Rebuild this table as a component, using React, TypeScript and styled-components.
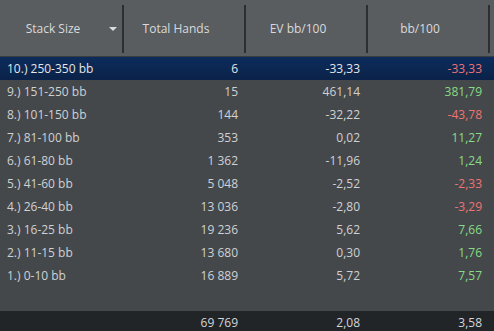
import React from "react";
import styled, { createGlobalStyle } from "styled-components";

const GlobalStyle = createGlobalStyle`
  html, body {
    margin: 0;
    padding: 0;
    background: #45484b;
  }
  body {
    font-family: "Open Sans", "Noto Sans", sans-serif;
    font-size: 12px;
  }
`;

type Tone = "plain" | "neg" | "pos";

interface IRow {
  label: string;
  hands: string;
  ev: string;
  bb: string;
  tone: Tone;
}

const rows: IRow[] = [
  { label: "10.) 250-350 bb", hands: "6", ev: "-33,33", bb: "-33,33", tone: "neg" },
  { label: "9.) 151-250 bb", hands: "15", ev: "461,14", bb: "381,79", tone: "pos" },
  { label: "8.) 101-150 bb", hands: "144", ev: "-32,22", bb: "-43,78", tone: "neg" },
  { label: "7.) 81-100 bb", hands: "353", ev: "0,02", bb: "11,27", tone: "pos" },
  { label: "6.) 61-80 bb", hands: "1 362", ev: "-11,96", bb: "1,24", tone: "pos" },
  { label: "5.) 41-60 bb", hands: "5 048", ev: "-2,52", bb: "-2,33", tone: "neg" },
  { label: "4.) 26-40 bb", hands: "13 036", ev: "-2,80", bb: "-3,29", tone: "neg" },
  { label: "3.) 16-25 bb", hands: "19 236", ev: "5,62", bb: "7,66", tone: "pos" },
  { label: "2.) 11-15 bb", hands: "13 680", ev: "0,30", bb: "1,76", tone: "pos" },
  { label: "1.) 0-10 bb", hands: "16 889", ev: "5,72", bb: "7,57", tone: "pos" },
];

const toneColor: Record<Tone, string> = {
  plain: "#cfd1d3",
  neg: "#ee7373",
  pos: "#86dc86",
};

const COLS = "124px 122px 122px 122px 4px";

const Grid = styled.div`
  width: 494px;
  height: 331px;
  display: flex;
  flex-direction: column;
  background: #45484b;
  overflow: hidden;
`;

const Header = styled.div`
  display: grid;
  grid-template-columns: ${COLS};
  height: 56px;
  background: #5a5d60;
  border-bottom: 1px solid #3a3d40;
`;

const HeadCell = styled.div`
  position: relative;
  display: flex;
  align-items: center;
  justify-content: center;
  padding-right: 18px;
  color: #d9dadb;
  font-size: 12px;
  &::after {
    content: "";
    position: absolute;
    right: 0;
    top: 5px;
    bottom: 3px;
    width: 2px;
    background: #2c2e30;
  }
`;

const SortArrow = styled.span`
  position: absolute;
  right: 7px;
  top: 27px;
  width: 0;
  height: 0;
  border-left: 4px solid transparent;
  border-right: 4px solid transparent;
  border-top: 4px solid #dcdcdc;
`;

const Body = styled.div`
  flex: 1;
  display: flex;
  flex-direction: column;
`;

const Row = styled.div<{ $selected?: boolean }>`
  display: grid;
  grid-template-columns: ${COLS};
  height: 23px;
  align-items: center;
  background: ${(p) =>
    p.$selected ? "linear-gradient(#0d2c5c, #0a2248)" : "transparent"};
  color: ${(p) => (p.$selected ? "#e4e6e8" : "#cfd1d3")};
`;

const Cell = styled.div<{ $right?: boolean; $color?: string }>`
  padding: ${(p) => (p.$right ? "0 8px 0 0" : "0 0 0 7px")};
  text-align: ${(p) => (p.$right ? "right" : "left")};
  color: ${(p) => p.$color || "inherit"};
  white-space: nowrap;
  line-height: 23px;
`;

const Footer = styled.div`
  display: grid;
  grid-template-columns: ${COLS};
  height: 20px;
  align-items: center;
  background: #222528;
  color: #d4d6d8;
`;

const App = () => {
  return (
    <>
      <GlobalStyle />
      <Grid>
        <Header>
          <HeadCell>
            Stack Size
            <SortArrow />
          </HeadCell>
          <HeadCell>Total Hands</HeadCell>
          <HeadCell>EV bb/100</HeadCell>
          <HeadCell>bb/100</HeadCell>
        </Header>
        <Body>
          {rows.map((r, i) => (
            <Row key={r.label} $selected={i === 0}>
              <Cell>{r.label}</Cell>
              <Cell $right>{r.hands}</Cell>
              <Cell $right>{r.ev}</Cell>
              <Cell $right $color={toneColor[r.tone]}>
                {r.bb}
              </Cell>
            </Row>
          ))}
        </Body>
        <Footer>
          <Cell />
          <Cell $right>69 769</Cell>
          <Cell $right>2,08</Cell>
          <Cell $right>3,58</Cell>
        </Footer>
      </Grid>
    </>
  );
};

export default App;
